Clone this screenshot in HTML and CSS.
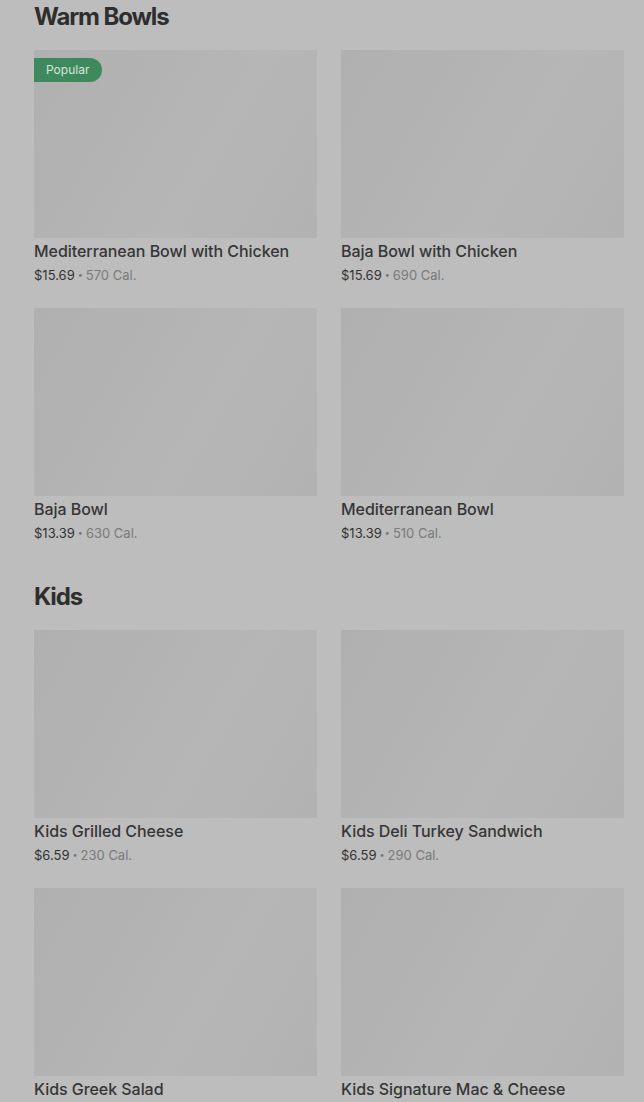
FILE: index.html
```html
<!DOCTYPE html>
<html>
<head>
<meta charset="utf-8">
<link rel="stylesheet" href="styles.css">
</head>
<body>
<main class="menu">
  <section class="section">
    <h2 class="section-title">Warm Bowls</h2>
    <div class="grid">
      <div class="card">
        <div class="thumb"><span class="badge">Popular</span></div>
        <div class="name">Mediterranean Bowl with Chicken</div>
        <div class="meta"><span class="price">$15.69</span><span class="dot">•</span><span class="cal">570 Cal.</span></div>
      </div>
      <div class="card">
        <div class="thumb"></div>
        <div class="name">Baja Bowl with Chicken</div>
        <div class="meta"><span class="price">$15.69</span><span class="dot">•</span><span class="cal">690 Cal.</span></div>
      </div>
      <div class="card">
        <div class="thumb"></div>
        <div class="name">Baja Bowl</div>
        <div class="meta"><span class="price">$13.39</span><span class="dot">•</span><span class="cal">630 Cal.</span></div>
      </div>
      <div class="card">
        <div class="thumb"></div>
        <div class="name">Mediterranean Bowl</div>
        <div class="meta"><span class="price">$13.39</span><span class="dot">•</span><span class="cal">510 Cal.</span></div>
      </div>
    </div>
  </section>
  <section class="section">
    <h2 class="section-title">Kids</h2>
    <div class="grid">
      <div class="card">
        <div class="thumb"></div>
        <div class="name">Kids Grilled Cheese</div>
        <div class="meta"><span class="price">$6.59</span><span class="dot">•</span><span class="cal">230 Cal.</span></div>
      </div>
      <div class="card">
        <div class="thumb"></div>
        <div class="name">Kids Deli Turkey Sandwich</div>
        <div class="meta"><span class="price">$6.59</span><span class="dot">•</span><span class="cal">290 Cal.</span></div>
      </div>
      <div class="card">
        <div class="thumb"></div>
        <div class="name">Kids Greek Salad</div>
        <div class="meta"><span class="price">$6.59</span><span class="dot">•</span><span class="cal">170 Cal.</span></div>
      </div>
      <div class="card">
        <div class="thumb"></div>
        <div class="name">Kids Signature Mac &amp; Cheese</div>
        <div class="meta"><span class="price">$6.59</span><span class="dot">•</span><span class="cal">380 Cal.</span></div>
      </div>
    </div>
  </section>
</main>
</body>
</html>
```
FILE: styles.css
```css
html, body {
  margin: 0;
  padding: 0;
  background: #bdbdbd;
  overflow: hidden;
}
body {
  font-family: "Inter", "Liberation Sans", sans-serif;
  color: #333333;
}
.menu {
  padding: 0 20px 0 34px;
  margin-top: -4px;
}
.section {
  padding-bottom: 32px;
}
.section-title {
  margin: 0;
  height: 42px;
  line-height: 42px;
  font-size: 24px;
  font-weight: 700;
  letter-spacing: -1.1px;
  color: #2e2e2e;
  margin-bottom: 12px;
}
.grid {
  display: grid;
  grid-template-columns: 283px 283px;
  column-gap: 24px;
  row-gap: 22px;
}
.card {
  display: flex;
  flex-direction: column;
}
.thumb {
  position: relative;
  height: 188px;
  background: linear-gradient(120deg, #b0b0b0 0%, #b3b3b3 35%, #b6b6b6 60%, #b2b2b2 100%);
}
.badge {
  position: absolute;
  left: 0;
  top: 8px;
  height: 24px;
  line-height: 24px;
  padding: 0 13px 0 12px;
  background: #3e8a5e;
  color: #d7e6dc;
  font-size: 12px;
  border-radius: 0 12px 12px 0;
}
.name {
  margin-top: 2px;
  font-size: 16px;
  font-weight: 500;
  line-height: 22px;
  color: #363636;
  letter-spacing: -0.05px;
}
.meta {
  padding-top: 2px;
  font-size: 13px;
  line-height: 22px;
  display: flex;
  align-items: center;
}
.price {
  color: #333333;
}
.dot {
  color: #777777;
  font-size: 9px;
  margin: 0 3px;
}
.cal {
  color: #7a7a7a;
}
```
